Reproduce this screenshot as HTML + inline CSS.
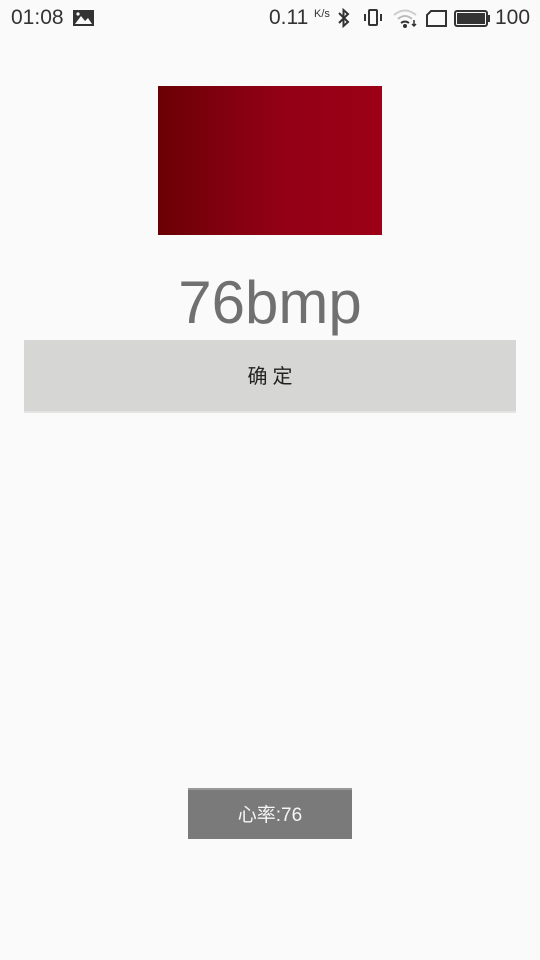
<!DOCTYPE html>
<html><head><meta charset="utf-8"><style>
html,body{margin:0;padding:0;width:540px;height:960px;background:#fafafa;overflow:hidden;font-family:"Liberation Sans","Noto Sans CJK SC",sans-serif;position:relative}
.a{position:absolute}
.sb{color:#333;font-size:21px}
</style></head><body>
<div class="a sb" style="left:11px;top:6px">01:08</div>
<svg class="a" style="left:73px;top:10px" width="21" height="16" viewBox="0 0 21 16"><rect x="0" y="0" width="21" height="16" fill="#333"/><path d="M2 14 L8 6 L12 11 L15 8 L19 14 Z" fill="#fafafa"/><circle cx="5" cy="4" r="1.6" fill="#fafafa"/></svg>
<div class="a sb" style="left:269px;top:6px">0.11</div>
<div class="a" style="left:314px;top:8px;font-size:11px;color:#333">K/s</div>
<svg class="a" style="left:337px;top:8px" width="14" height="20" viewBox="0 0 14 20"><path d="M2 5 L11 14 L6.5 18 V2 L11 6 L2 15" fill="none" stroke="#333" stroke-width="2"/></svg>
<svg class="a" style="left:363px;top:9px" width="20" height="18" viewBox="0 0 20 18"><rect x="6" y="1" width="8" height="15" rx="1" fill="none" stroke="#333" stroke-width="2"/><path d="M2 5v7M18 5v7" stroke="#333" stroke-width="2"/></svg>
<svg class="a" style="left:393px;top:9px" width="26" height="20" viewBox="0 0 26 20"><path d="M1 6 Q12 -3 23 6" fill="none" stroke="#ccc" stroke-width="2"/><path d="M5 10 Q12 4 19 10" fill="none" stroke="#bbb" stroke-width="2"/><path d="M8 14 Q12 11 16 14" fill="none" stroke="#333" stroke-width="2"/><circle cx="12" cy="17" r="2" fill="#333"/><path d="M21 11v6M19 15l2 2 2-2" stroke="#333" stroke-width="1.5" fill="none"/></svg>
<svg class="a" style="left:426px;top:10px" width="22" height="17" viewBox="0 0 22 17"><path d="M5 1 H20 V16 H1 V5 Z" fill="none" stroke="#333" stroke-width="2"/></svg>
<svg class="a" style="left:454px;top:10px" width="36" height="17" viewBox="0 0 36 17"><rect x="1" y="1" width="32" height="15" rx="2" fill="none" stroke="#333" stroke-width="2"/><rect x="3" y="3" width="28" height="11" fill="#333"/><rect x="33" y="5" width="3" height="7" fill="#333"/></svg>
<div class="a sb" style="left:495px;top:6px">100</div>
<div class="a" style="left:158px;top:86px;width:224px;height:149px;background:linear-gradient(90deg,#6a0004 0%,#820010 30%,#930016 55%,#9c0016 100%)"></div>
<div class="a" style="left:0;width:540px;top:263px;text-align:center;font-size:60px;color:#707070;line-height:80px">76bmp</div>
<div class="a" style="left:24px;top:340px;width:492px;height:73px;background:#d6d7d5;border-bottom:2px solid #e4e5e3;box-sizing:border-box;text-align:center;line-height:74px;font-size:20px;color:#222;letter-spacing:5px;padding-left:5px">确定</div>
<div class="a" style="left:188px;top:788px;width:164px;height:51px;background:#7a7a7a;border-top:2px solid #999;box-sizing:border-box;text-align:center;line-height:51px;font-size:19px;color:#f5f5f5">心率:76</div>
</body></html>
